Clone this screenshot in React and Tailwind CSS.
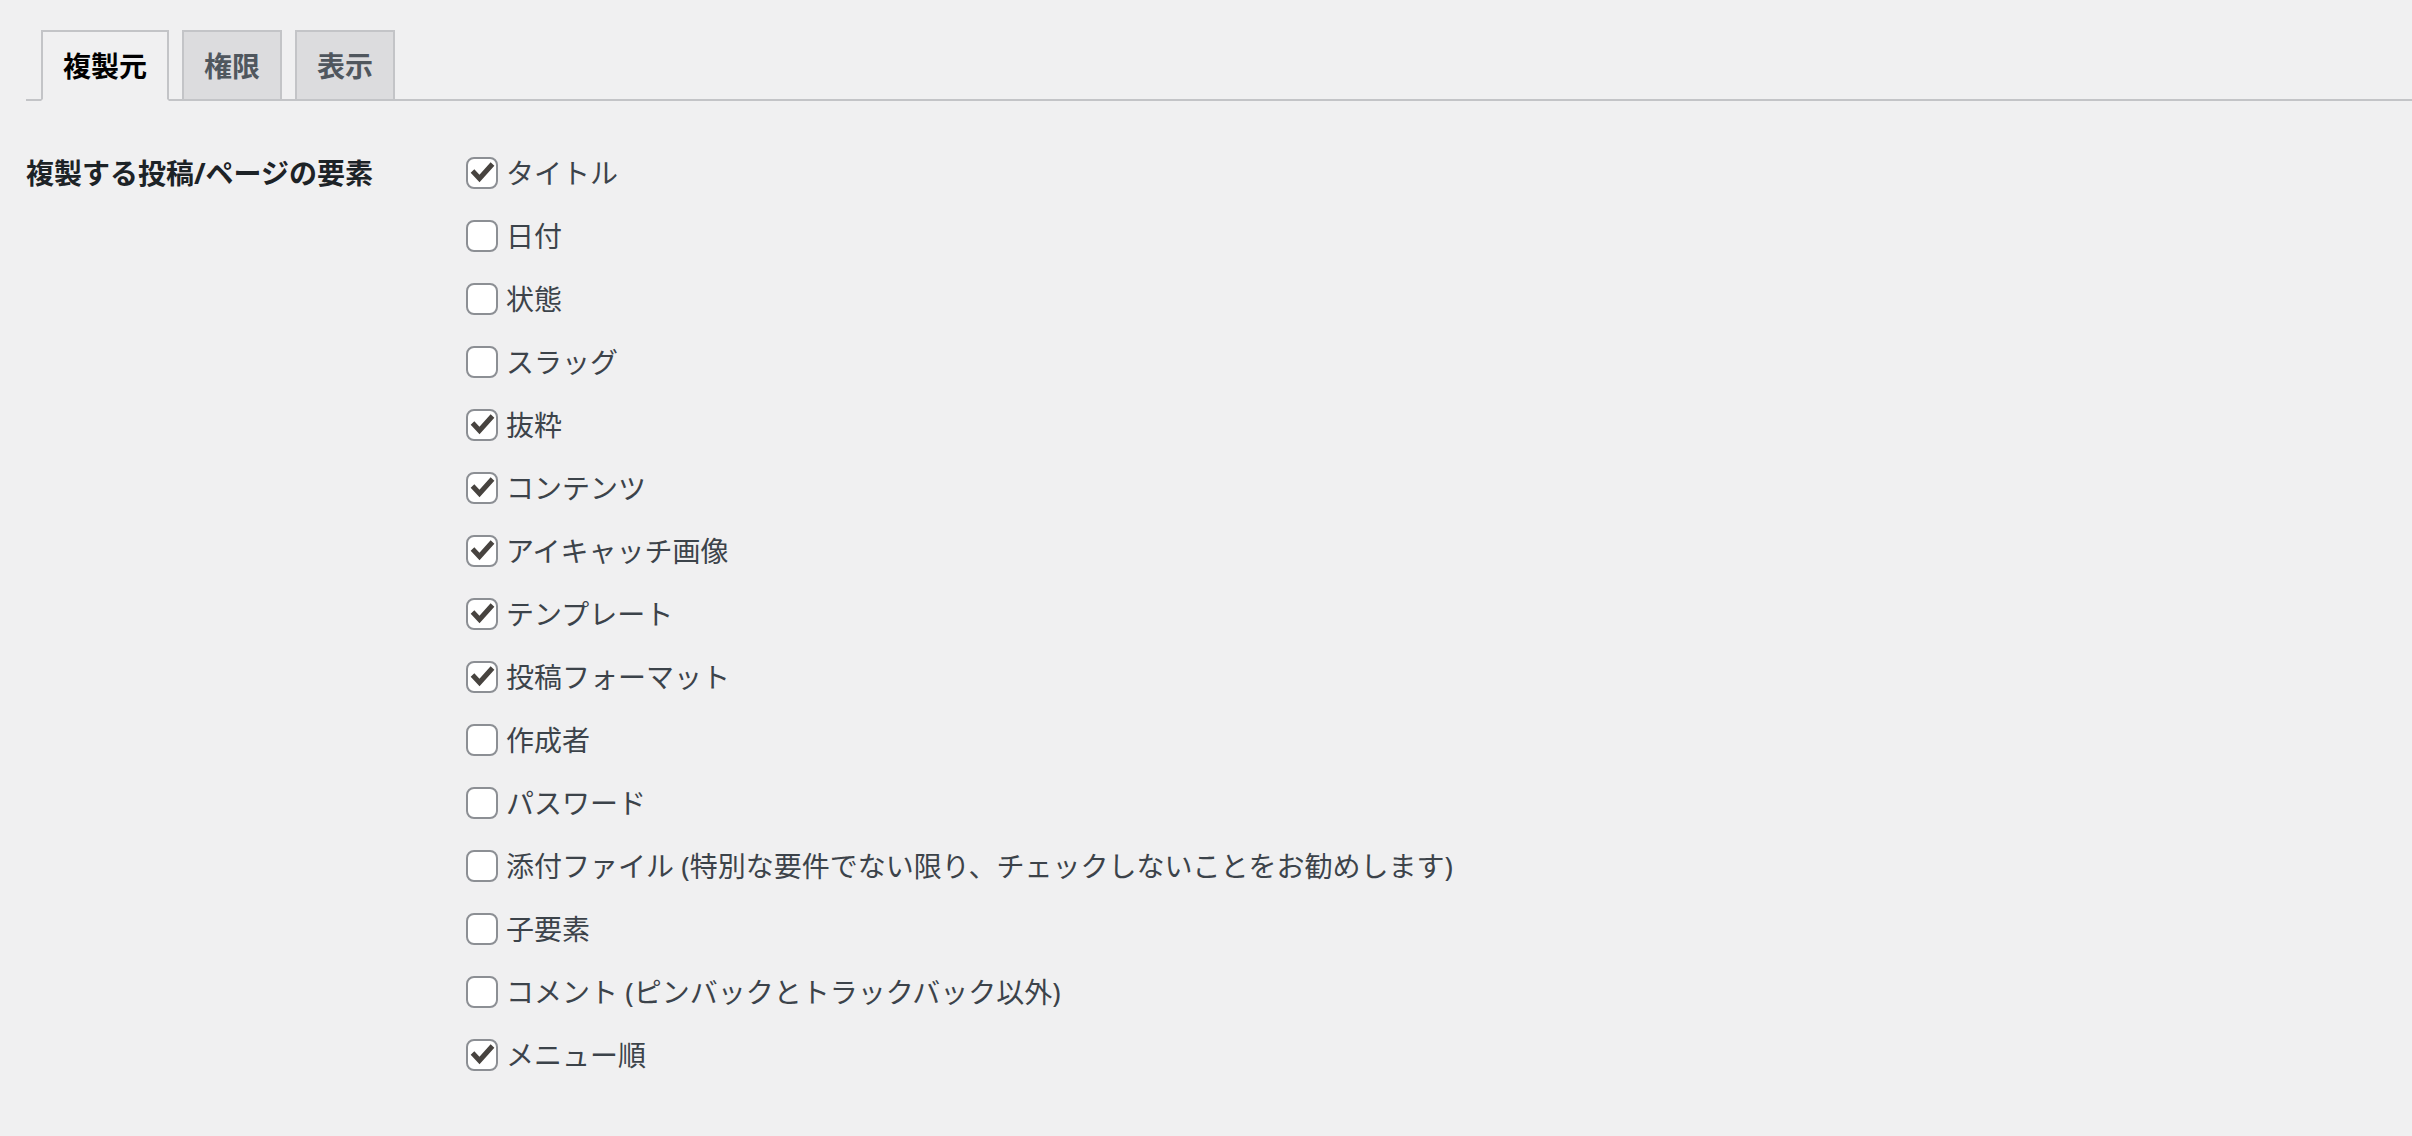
const tabs = [
  { label: "複製元", active: true },
  { label: "権限", active: false },
  { label: "表示", active: false },
];

const items = [
  { label: "タイトル", checked: true },
  { label: "日付", checked: false },
  { label: "状態", checked: false },
  { label: "スラッグ", checked: false },
  { label: "抜粋", checked: true },
  { label: "コンテンツ", checked: true },
  { label: "アイキャッチ画像", checked: true },
  { label: "テンプレート", checked: true },
  { label: "投稿フォーマット", checked: true },
  { label: "作成者", checked: false },
  { label: "パスワード", checked: false },
  { label: "添付ファイル (特別な要件でない限り、チェックしないことをお勧めします)", checked: false },
  { label: "子要素", checked: false },
  { label: "コメント (ピンバックとトラックバック以外)", checked: false },
  { label: "メニュー順", checked: true },
];

const font = { fontFamily: '"Noto Sans", "Noto Sans CJK JP", sans-serif' };

function Checkbox({ checked }) {
  return (
    <span className="relative inline-block h-[32px] w-[32px] shrink-0 rounded-[8px] border-2 border-[#8c8f94] bg-white">
      {checked && (
        <svg className="absolute left-[-2px] top-[-2px]" width="32" height="32" viewBox="0 0 32 32">
          <polyline
            points="6.5,14 13.5,21.5 26.5,7"
            fill="none"
            stroke="#47433f"
            strokeWidth="5"
            strokeLinejoin="miter"
          />
        </svg>
      )}
    </span>
  );
}

export default function App() {
  return (
    <div className="min-h-screen bg-[#f0f0f1] pl-[26px]" style={font}>
      {/* Tabs */}
      <div className="flex items-end gap-[13px] border-b-2 border-[#c3c4c7] pl-[15px] pt-[30px]">
        {tabs.map((t) => (
          <div
            key={t.label}
            className={
              t.active
                ? "-mb-[2px] border-2 border-[#c3c4c7] border-b-[#f0f0f1] bg-[#f0f0f1] px-[20px] pb-[9px] pt-[10px] text-[28px] font-bold leading-[48px] text-black"
                : "-mb-[2px] border-2 border-[#c3c4c7] bg-[#dcdcde] px-[20px] pb-[9px] pt-[10px] text-[28px] font-bold leading-[48px] text-[#50575e]"
            }
          >
            {t.label}
          </div>
        ))}
      </div>

      {/* Form table */}
      <div className="flex pt-[40px]">
        <div className="flex h-[63px] w-[440px] shrink-0 items-center text-[28px] font-bold text-[#1d2327]">
          複製する投稿/ページの要素
        </div>
        <div className="flex flex-col">
          {items.map((it) => (
            <label key={it.label} className="flex h-[63px] items-center gap-[8px] text-[28px] text-[#3c434a]">
              <Checkbox checked={it.checked} />
              <span>{it.label}</span>
            </label>
          ))}
        </div>
      </div>
    </div>
  );
}
